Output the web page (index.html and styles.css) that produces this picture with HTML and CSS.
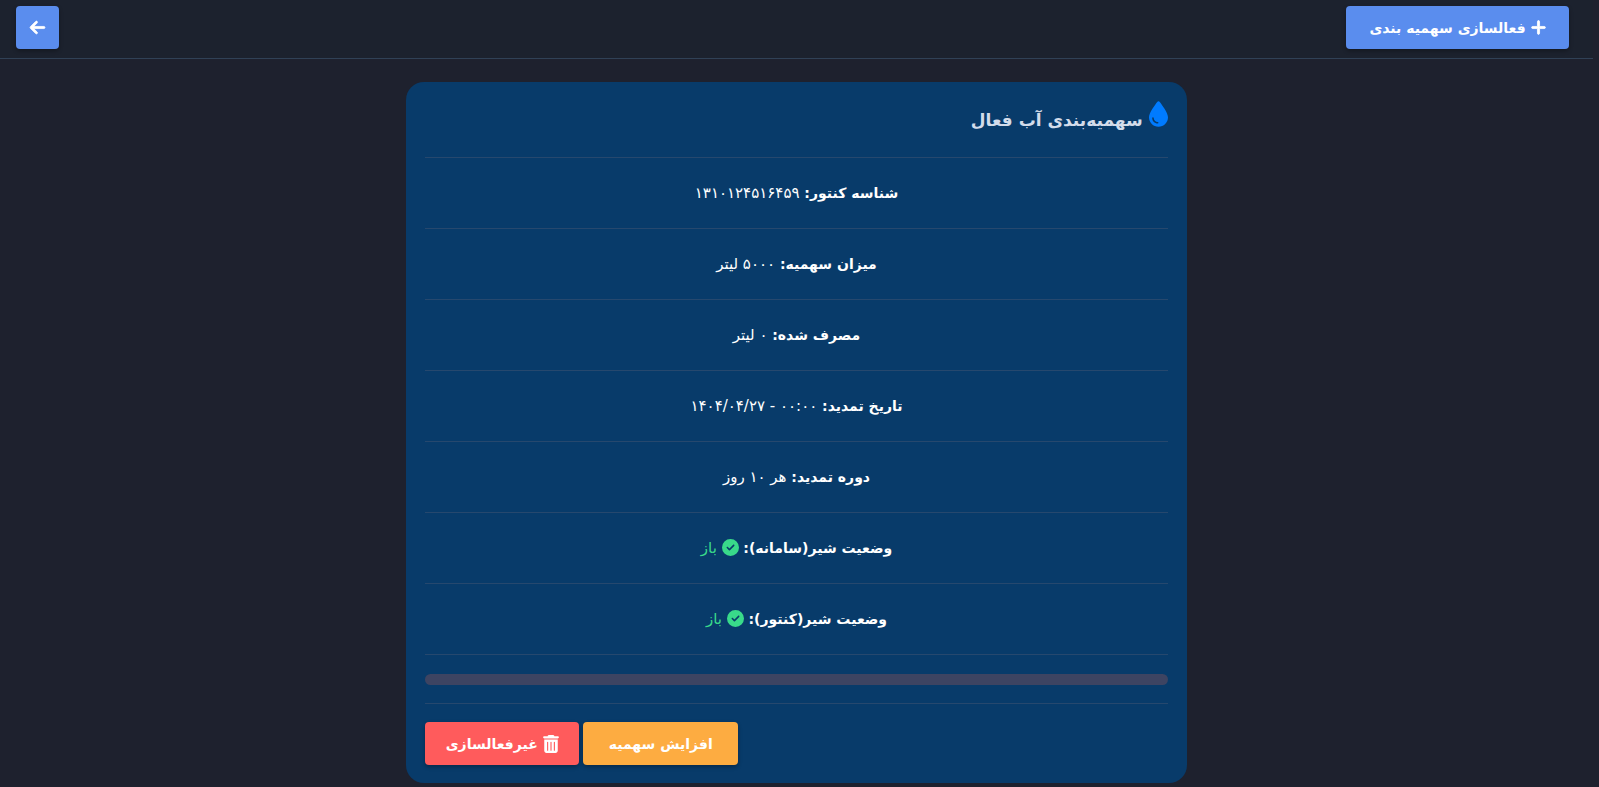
FILE: index.html
```html
<!DOCTYPE html>
<html lang="fa" dir="rtl">
<head>
    <meta charset="UTF-8">
    <meta name="viewport" content="width=device-width, initial-scale=1.0">
    <title>سهمیه بندی</title>
    <link rel="stylesheet" href="styles.css">
</head>
<body>
    <!-- Top bar -->
    <header class="topbar">
        <button type="button" class="btn btn-primary btn-add">
            <svg class="icon icon-bold" viewBox="0 0 448 512" aria-hidden="true"><path d="M256 80c0-17.7-14.3-32-32-32s-32 14.300-32 32V224H48c-17.7 0-32 14.3-32 32s14.3 32 32 32H192V432c0 17.7 14.3 32 32 32s32-14.3 32-32V288H400c17.7 0 32-14.3 32-32s-14.3-32-32-32H256V80z"/></svg>
            <span>فعالسازی سهمیه بندی</span>
        </button>
        <button type="button" class="btn btn-primary btn-back" aria-label="بازگشت">
            <svg class="icon icon-bold" viewBox="0 0 448 512" aria-hidden="true"><path d="M9.4 233.4c-12.5 12.5-12.5 32.8 0 45.3l160 160c12.5 12.5 32.8 12.5 45.3 0s12.5-32.8 0-45.3L109.2 288 416 288c17.7 0 32-14.3 32-32s-14.3-32-32-32l-306.7 0L214.6 118.6c12.5-12.5 12.5-32.8 0-45.3s-32.8-12.5-45.3 0l-160 160z"/></svg>
        </button>
    </header>

    <!-- Quota card -->
    <main class="card">
        <h1 class="card-title">
            <svg class="icon icon-drop" viewBox="0 0 384 512" aria-hidden="true"><path d="M192 512C86 512 0 426 0 320C0 228.8 130.2 57.7 166.6 11.7C172.6 4.2 181.5 0 191.1 0h1.8c9.6 0 18.5 4.2 24.5 11.7C253.8 57.7 384 228.8 384 320c0 106-86 192-192 192zM96 336c0-8.8-7.2-16-16-16s-16 7.2-16 16c0 61.9 50.1 112 112 112c8.8 0 16-7.2 16-16s-7.2-16-16-16c-44.2 0-80-35.8-80-80z"/></svg>
            <span>سهمیه‌بندی آب فعال</span>
        </h1>

        <p class="row"><strong>شناسه کنتور:</strong> ۱۳۱۰۱۲۴۵۱۶۴۵۹</p>
        <p class="row"><strong>میزان سهمیه:</strong> ۵۰۰۰ لیتر</p>
        <p class="row"><strong>مصرف شده:</strong> ۰ لیتر</p>
        <p class="row"><strong>تاریخ تمدید:</strong> ۰۰:۰۰ - ۱۴۰۴/۰۴/۲۷</p>
        <p class="row"><strong>دوره تمدید:</strong> هر ۱۰ روز</p>
        <p class="row">
            <strong>وضعیت شیر(سامانه):</strong>
            <span class="open"><svg class="icon icon-check" viewBox="0 0 512 512" aria-hidden="true"><path d="M256 512A256 256 0 1 0 256 0a256 256 0 1 0 0 512zM369 209L241 337c-9.4 9.4-24.6 9.4-33.9 0l-64-64c-9.4-9.4-9.4-24.6 0-33.9s24.6-9.4 33.9 0l47 47L335 175c9.4-9.4 24.6-9.4 33.9 0s9.4 24.6 0 33.9z"/></svg> باز</span>
        </p>
        <p class="row">
            <strong>وضعیت شیر(کنتور):</strong>
            <span class="open"><svg class="icon icon-check" viewBox="0 0 512 512" aria-hidden="true"><path d="M256 512A256 256 0 1 0 256 0a256 256 0 1 0 0 512zM369 209L241 337c-9.4 9.4-24.6 9.4-33.9 0l-64-64c-9.4-9.4-9.4-24.6 0-33.9s24.6-9.4 33.9 0l47 47L335 175c9.4-9.4 24.6-9.4 33.9 0s9.4 24.6 0 33.9z"/></svg> باز</span>
        </p>

        <div class="usage">
            <div class="progress" role="progressbar" aria-label="مصرف" aria-valuenow="0" aria-valuemin="0" aria-valuemax="5000"></div>
        </div>

        <div class="actions">
            <button type="button" class="btn btn-warning">افزایش سهمیه</button>
            <button type="button" class="btn btn-danger">
                <svg class="icon icon-trash" viewBox="0 0 448 512" aria-hidden="true"><path d="M135.2 17.7L128 32H32C14.3 32 0 46.3 0 64S14.3 96 32 96H416c17.7 0 32-14.3 32-32s-14.3-32-32-32H320l-7.2-14.3C307.4 6.8 296.3 0 284.2 0H163.8c-12.1 0-23.2 6.8-28.6 17.7zM416 128H32V448c0 35.3 28.7 64 64 64H352c35.3 0 64-28.7 64-64V128zM144 208V432c0 8.8-7.2 16-16 16s-16-7.2-16-16V208c0-8.8 7.2-16 16-16s16 7.2 16 16zm96 0V432c0 8.8-7.2 16-16 16s-16-7.2-16-16V208c0-8.8 7.2-16 16-16s16 7.2 16 16zm96 0V432c0 8.8-7.2 16-16 16s-16-7.2-16-16V208c0-8.8 7.2-16 16-16s16 7.2 16 16z"/></svg>
                <span>غیرفعالسازی</span>
            </button>
        </div>
    </main>
</body>
</html>
```
FILE: styles.css
```css
* {
    box-sizing: border-box;
}

body {
    margin: 0;
    padding-right: 6px;
    background: #1e212e;
    color: #fff;
    font-family: "DejaVu Sans", sans-serif;
    font-size: 15px;
}

.topbar {
    display: flex;
    justify-content: space-between;
    align-items: flex-start;
    padding: 6px 24px 9px 16px;
    background: #1c222e;
    border-bottom: 1px solid #304156;
}

.btn {
    display: flex;
    justify-content: center;
    align-items: center;
    gap: 5px;
    height: 43px;
    padding: 0 10px;
    border: none;
    border-radius: 4px;
    color: #fff;
    font-family: inherit;
    font-size: 14px;
    font-weight: bold;
    white-space: nowrap;
    cursor: pointer;
    box-shadow: 0 2px 4px rgba(0, 0, 0, 0.3);
}

.btn-primary {
    background: #5a8dee;
}

.btn-warning {
    width: 155px;
    background: #fdac41;
}

.btn-danger {
    width: 154px;
    background: #ff5b5c;
}

.btn-add {
    width: 223px;
}

.btn-back {
    width: 43px;
}

.icon {
    flex: none;
    width: 15px;
    height: 17px;
    fill: currentColor;
}

.icon-bold {
    overflow: visible;
    stroke: currentColor;
    stroke-width: 24;
}

.icon-trash {
    width: 16px;
    height: 18px;
}

.card {
    width: 49%;
    margin: 23px auto 3px;
    padding: 19px 19px 18px;
    border-radius: 18px;
    background: #083b6a;
}

.card-title {
    display: flex;
    align-items: flex-start;
    gap: 6px;
    margin: 0;
    height: 56px;
    color: #d3dcea;
    font-size: 17px;
    line-height: 38px;
}

.icon-drop {
    width: 19px;
    height: 26px;
    color: #007bff;
}

.row {
    margin: 0;
    padding: 18px 0;
    border-top: 1px solid #26486e;
    line-height: 34px;
    text-align: center;
}

.row strong {
    font-size: 14px;
}

.open {
    color: #39da8a;
}

.icon-check {
    width: 17px;
    height: 17px;
    vertical-align: -3px;
}

.usage {
    padding: 19px 0 18px;
    border-top: 1px solid #26486e;
    border-bottom: 1px solid #26486e;
}

.progress {
    height: 11px;
    border-radius: 6px;
    background: #3d4462;
}

.actions {
    display: flex;
    justify-content: flex-end;
    gap: 4px;
    padding-top: 18px;
}
```
